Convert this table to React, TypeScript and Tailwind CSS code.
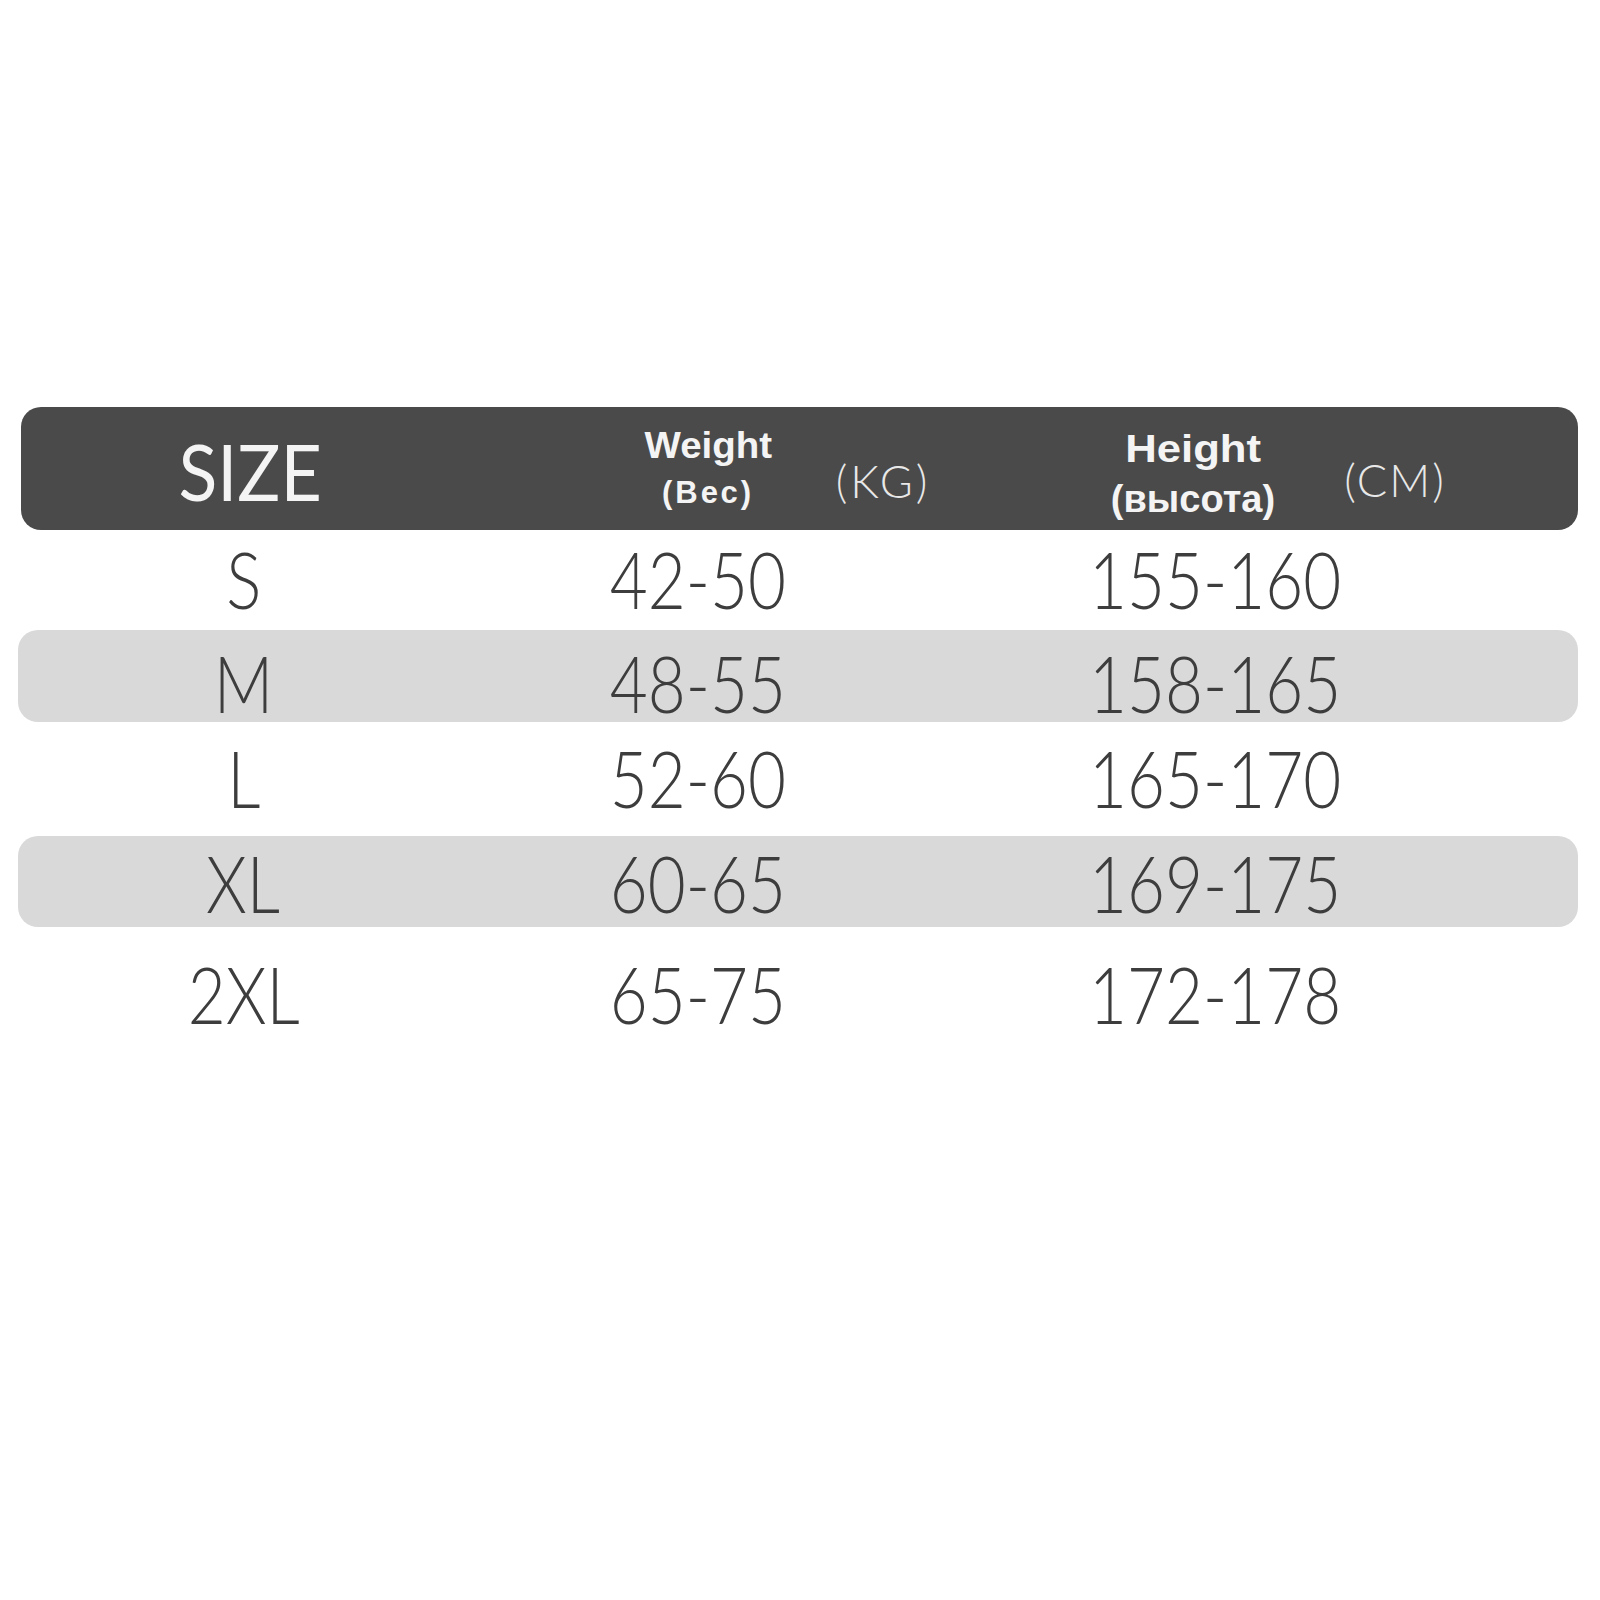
const rows = [
  { size: "S", weight: "42-50", height: "155-160", band: false, h: "h-[100px]", pt: "pt-[10px]" },
  { size: "M", weight: "48-55", height: "158-165", band: true, h: "h-[92px]", pt: "pt-[14px]" },
  { size: "L", weight: "52-60", height: "165-170", band: false, h: "h-[114px]", pt: "pt-[17px]" },
  { size: "XL", weight: "60-65", height: "169-175", band: true, h: "h-[91px]", pt: "pt-[8px]" },
  { size: "2XL", weight: "65-75", height: "172-178", band: false, h: "h-[136px]", pt: "pt-[28px]" },
]

const lato = "font-['Lato','Open_Sans',sans-serif]"
const arial = "font-['Liberation_Sans','Arial',sans-serif] font-bold"

function Cell({ text }: { text: string }) {
  return (
    <div className="flex justify-center">
      <span className={`${lato} inline-block scale-x-[0.84] text-[78px] leading-none font-light text-[#3d3d3d]`}>{text}</span>
    </div>
  )
}

export default function App() {
  return (
    <div className="min-h-[1600px] w-[1600px] bg-white pt-[407px]">
      <div className="ml-[18px] w-[1560px]">
        {/* header */}
        <div className="ml-[3px] flex h-[123px] items-center rounded-[20px] bg-[#4a4a4a] text-[#f4f4f4]">
          <div className="flex w-[458px] justify-center">
            <span className={`${lato} mt-[6px] inline-block scale-x-[0.93] text-[77px] leading-none font-normal`}>SIZE</span>
          </div>
          <div className={`${arial} ml-[164px] flex w-[130px] flex-col items-center`}>
            <span className="inline-block scale-x-[1.04] text-[37px] leading-[47px]">Weight</span>
            <span className="text-[31px] leading-[47px] tracking-[3px]">(Вес)</span>
          </div>
          <div className="ml-[50px] flex w-[120px] justify-center">
            <span className={`${lato} mt-[25px] text-[45px] leading-none font-light tracking-[3px] text-[#e8e8e8]`}>(KG)</span>
          </div>
          <div className={`${arial} mt-[10px] ml-[160px] flex w-[180px] flex-col items-center`}>
            <span className="inline-block scale-x-[1.15] text-[38px] leading-[50px]">Height</span>
            <span className="text-[38px] leading-[50px]">(высота)</span>
          </div>
          <div className="ml-[52px] flex w-[120px] justify-center">
            <span className={`${lato} mt-[24px] text-[45px] leading-none font-light tracking-[2px] text-[#e8e8e8]`}>(CM)</span>
          </div>
        </div>

        {/* rows */}
        {rows.map((r) => (
          <div
            key={r.size}
            className={`grid grid-cols-[451px_458px_576px_1fr] items-start ${r.h} ${r.pt} ${r.band ? "rounded-[20px] bg-[#d9d9d9]" : ""}`}
          >
            <Cell text={r.size} />
            <Cell text={r.weight} />
            <Cell text={r.height} />
          </div>
        ))}
      </div>
    </div>
  )
}
